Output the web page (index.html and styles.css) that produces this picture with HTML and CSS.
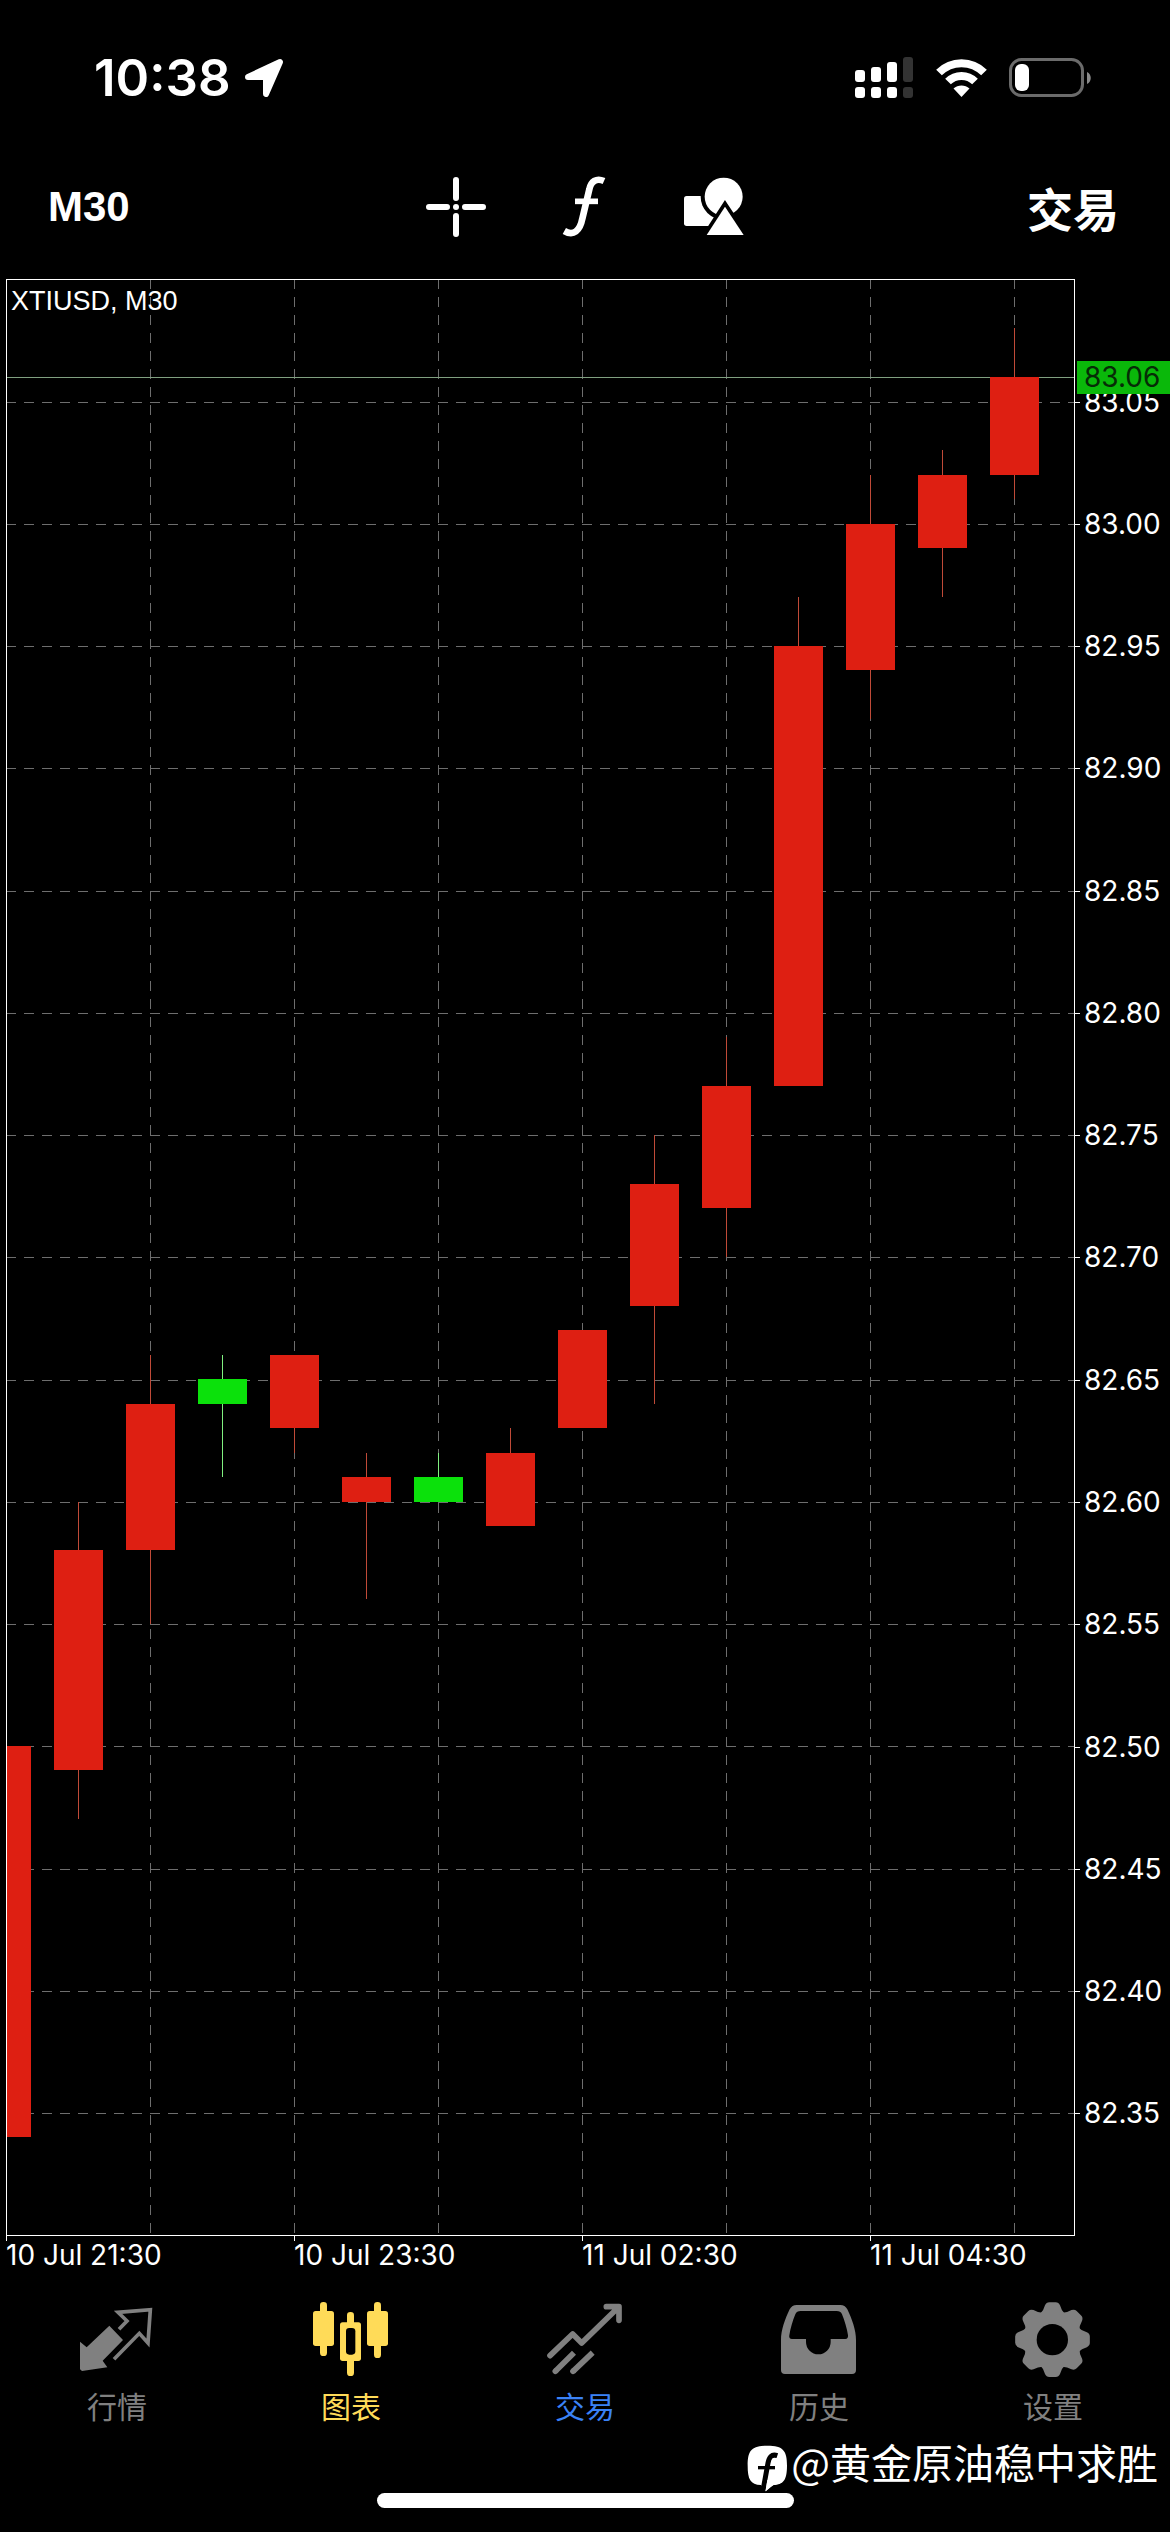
FILE: index.html
```html
<!DOCTYPE html>
<html lang="zh-CN">
<head>
<meta charset="utf-8">
<meta name="viewport" content="width=device-width, initial-scale=1">
<title>XTIUSD, M30</title>
<link rel="stylesheet" href="styles.css">
</head>
<body>
<div class="app">
  <header class="status">
    <div class="status-left">
      <span class="clock">10:38</span>
      <svg class="location" width="42" height="42" viewBox="0 0 42 42" aria-hidden="true">
        <path d="M5 20 37 5 23 37V20Z" fill="#fff" stroke="#fff" stroke-width="6" stroke-linejoin="round"/>
      </svg>
    </div>
    <div class="status-right">
      <svg width="59" height="42" viewBox="0 0 59 42" aria-hidden="true">
        <g fill="#fff">
          <rect x="0" y="13" width="10" height="12" rx="3"/><rect x="0" y="30" width="10" height="11" rx="3"/>
          <rect x="16" y="10" width="10" height="15" rx="3"/><rect x="16" y="30" width="10" height="11" rx="3"/>
          <rect x="32" y="5" width="10" height="20" rx="3"/><rect x="32" y="30" width="10" height="11" rx="3"/>
        </g>
        <g fill="#333">
          <rect x="48" y="0" width="10" height="25" rx="3"/><rect x="48" y="30" width="10" height="11" rx="3"/>
        </g>
      </svg>
      <svg width="51" height="38" viewBox="0 0 51 38" aria-hidden="true">
        <g fill="none" stroke="#fff" stroke-width="8">
          <path d="M3 13.500C15.500 1 35.500 1 48 13.500"/>
          <path d="M12 22.500C19.500 15 31.500 15 39 22.500"/>
        </g>
        <path d="M25.500 38 17.500 29.500C22 25.500 29 25.500 33.500 29.500Z" fill="#fff"/>
      </svg>
      <svg width="83" height="40" viewBox="0 0 83 40" aria-hidden="true">
        <rect x="1.500" y="1.500" width="72" height="36" rx="11" fill="none" stroke="#6b6b6b" stroke-width="3"/>
        <rect x="6" y="6" width="14" height="27" rx="6" fill="#fff"/>
        <path d="M78 14C83 16 83 24 78 26Z" fill="#8a8a8a"/>
      </svg>
    </div>
  </header>

  <div class="toolbar">
    <button class="timeframe" type="button">M30</button>
    <div class="tools">
      <button type="button" aria-label="十字线">
        <svg width="64" height="64" viewBox="0 0 64 64" aria-hidden="true">
          <path d="M5 32H23M41 32H59M32 5V23M32 41V59" stroke="#fff" stroke-width="6" stroke-linecap="round"/>
          <circle cx="32" cy="32" r="3" fill="#fff"/>
        </svg>
      </button>
      <button type="button" aria-label="指标">
        <svg width="64" height="64" viewBox="33 45 192 192" fill="none" stroke="#fff" aria-hidden="true">
          <path d="M189 63C166 53 150 64 145 88L124 176C117 212 98 229 70 213" stroke-width="20"/>
          <path d="M102 124H171" stroke-width="17"/>
        </svg>
      </button>
      <button type="button" aria-label="图形">
        <svg width="64" height="64" viewBox="417 45 192 192" aria-hidden="true">
          <rect x="429" y="108" width="90" height="90" rx="8" fill="#fff"/>
          <circle cx="548" cy="110" r="69" fill="#000"/>
          <circle cx="548" cy="110" r="57" fill="#fff"/>
          <path d="M552 140 608 225H497Z" fill="#fff" stroke="#000" stroke-width="22" paint-order="stroke"/>
        </svg>
      </button>
    </div>
    <button class="trade" type="button">交易</button>
  </div>

  <main class="chart">
    <div class="plot">
      <svg class="plot-area" viewBox="0 0 1069 1957" role="img" aria-label="XTIUSD M30">
        <g class="grid-lines">
          <path d="M0 123.500H1068M0 245.500H1068M0 367.500H1068M0 489.500H1068M0 612.500H1068M0 734.500H1068M0 856.500H1068M0 978.500H1068M0 1101.500H1068M0 1223.500H1068M0 1345.500H1068M0 1467.500H1068M0 1590.500H1068M0 1712.500H1068M0 1834.500H1068"/>
          <path d="M144.500 0V1956M288.500 0V1956M432.500 0V1956M576.500 0V1956M720.500 0V1956M864.500 0V1956M1008.500 0V1956"/>
        </g>
        <path class="bid-line" d="M0 98.500H1068"/>
        <g class="down">
          <path class="wick" d="M72.500 1223V1540M144.500 1076V1345M288.500 1149V1174M360.500 1174V1320M504.500 1149V1174M648.500 856V1125M720.500 758V978M792.500 318V367M864.500 196V440M936.500 171V318M1008.500 49V220"/>
          <rect x="1" y="1467" width="24" height="391"/>
          <rect x="48" y="1271" width="49" height="220"/>
          <rect x="120" y="1125" width="49" height="146"/>
          <rect x="264" y="1076" width="49" height="73"/>
          <rect x="336" y="1198" width="49" height="25"/>
          <rect x="480" y="1174" width="49" height="73"/>
          <rect x="552" y="1051" width="49" height="98"/>
          <rect x="624" y="905" width="49" height="122"/>
          <rect x="696" y="807" width="49" height="122"/>
          <rect x="768" y="367" width="49" height="440"/>
          <rect x="840" y="245" width="49" height="146"/>
          <rect x="912" y="196" width="49" height="73"/>
          <rect x="984" y="98" width="49" height="98"/>
        </g>
        <g class="up">
          <path class="wick" d="M216.500 1076V1198M432.500 1174V1198"/>
          <rect x="192" y="1100" width="49" height="25"/>
          <rect x="408" y="1198" width="49" height="25"/>
        </g>
        <rect class="frame" x="0.500" y="0.500" width="1068" height="1956"/>
      </svg>
      <h1 class="symbol">XTIUSD, M30</h1>
    </div>
    <div class="prices">
      <span>83.05</span><span>83.00</span><span>82.95</span><span>82.90</span><span>82.85</span>
      <span>82.80</span><span>82.75</span><span>82.70</span><span>82.65</span><span>82.60</span>
      <span>82.55</span><span>82.50</span><span>82.45</span><span>82.40</span><span>82.35</span>
      <strong class="bid" style="top: 5%">83.06</strong>
    </div>
    <div class="times">
      <span>10 Jul 21:30</span><span>10 Jul 23:30</span><span>11 Jul 02:30</span><span>11 Jul 04:30</span>
    </div>
  </main>

  <nav class="tabs">
    <a href="#quotes">
      <svg viewBox="51 24 240 240" aria-hidden="true">
        <path d="M60 155 80 172 148 107 189 150 128 212 142 232 66 243 60 238Z" fill="currentColor"/>
        <path d="M177 118 201 93 174 67 271 59 264 159 238 130 162 208" fill="none" stroke="currentColor" stroke-width="11"/>
      </svg>
      <span>行情</span>
    </a>
    <a class="active" href="#chart" aria-current="page">
      <svg viewBox="753 24 240 240" fill="currentColor" aria-hidden="true">
        <rect x="759" y="63" width="63" height="105" rx="8"/><rect x="780" y="36" width="21" height="162" rx="10"/>
        <rect x="921" y="63" width="63" height="105" rx="8"/><rect x="942" y="36" width="21" height="168" rx="10"/>
        <rect x="861" y="66" width="21" height="192" rx="10"/><rect x="840" y="97" width="63" height="116" rx="8"/>
        <rect x="858" y="114" width="28" height="80" rx="10" fill="#000"/>
      </svg>
      <span>图表</span>
    </a>
    <a class="alert" href="#trade">
      <svg viewBox="45 24 240 240" fill="none" stroke="currentColor" stroke-width="17" aria-hidden="true">
        <path d="M60 197 128 132 155 159 264 53M229 50H267V91" stroke-linecap="round" stroke-linejoin="round"/>
        <path d="M76 244 132 188M129 244 188 188"/>
        <path d="M76 244 77 243M129 244 130 243" stroke-linecap="round"/>
      </svg>
      <span>交易</span>
    </a>
    <a href="#history">
      <svg viewBox="147 24 240 240" fill="currentColor" aria-hidden="true">
        <path fill-rule="evenodd" d="M153 150C153 120 165 88 179 58Q186 45 200 45H331Q345 45 352 58C366 88 378 120 378 150V240Q378 252 366 252H165Q153 252 153 240ZM212 63H320Q332 63 336 73C344 93 351 115 354 136Q355 147 346 147H302V156A37 37 0 0 1 228 156V147H186Q176 147 178 136C181 115 188 93 196 73Q200 63 212 63Z"/>
      </svg>
      <span>历史</span>
    </a>
    <a href="#settings">
      <svg viewBox="849 24 240 240" fill="currentColor" aria-hidden="true">
        <defs>
          <path id="tooth" d="M930 72Q941 62 945 46Q949 37 958 37H977Q986 37 990 46Q994 62 1005 72V110H930Z"/>
        </defs>
        <circle cx="967" cy="149" r="67" fill="none" stroke="currentColor" stroke-width="40"/>
        <use href="#tooth"/>
        <use href="#tooth" transform="rotate(45 967.500 149)"/>
        <use href="#tooth" transform="rotate(90 967.500 149)"/>
        <use href="#tooth" transform="rotate(135 967.500 149)"/>
        <use href="#tooth" transform="rotate(180 967.500 149)"/>
        <use href="#tooth" transform="rotate(225 967.500 149)"/>
        <use href="#tooth" transform="rotate(270 967.500 149)"/>
        <use href="#tooth" transform="rotate(315 967.500 149)"/>
        <circle cx="967" cy="149" r="47" fill="#000"/>
      </svg>
      <span>设置</span>
    </a>
  </nav>

  <footer class="author">
    <svg width="40" height="47" viewBox="42 468 120 141" aria-hidden="true">
      <path d="M44 530C44 485 55 470 103 470S162 485 162 530S150 586 122 588Q110 592 98 607L84 588C52 587 44 570 44 530Z" fill="#fff"/>
      <path d="M133 500C115 494 108 505 105 522L90 604" fill="none" stroke="#000" stroke-width="15"/>
      <path d="M75 536H126" stroke="#000" stroke-width="10"/>
      <path d="M98 607 103 572 124 586Z" fill="#fff"/>
    </svg>
    <span>@黄金原油稳中求胜</span>
  </footer>
  <div class="home-bar"></div>
</div>
</body>
</html>
```
FILE: styles.css
```css
* {
  box-sizing: border-box;
}

body {
  margin: 0;
  background: #000;
  color: #fff;
  font-family: Inter, "Noto Sans CJK SC", sans-serif;
}

svg {
  display: block;
  flex: none;
}

button {
  padding: 0;
  border: 0;
  background: none;
  color: inherit;
  font: inherit;
}

.app {
  display: flex;
  flex-direction: column;
  padding-bottom: 20px;
}

/* status bar */
.status {
  display: flex;
  justify-content: space-between;
  align-items: center;
  height: 156px;
  padding: 0 78px 0 94px;
}

.status-left {
  display: flex;
  align-items: center;
  gap: 12px;
}

.clock {
  font-size: 51px;
  font-weight: 600;
  line-height: 60px;
}

.status-right {
  display: flex;
  align-items: center;
  gap: 22px;
}

/* toolbar */
.toolbar {
  display: grid;
  grid-template-columns: 1fr auto 1fr;
  align-items: center;
  height: 102px;
  margin-bottom: 21px;
  padding: 0 51px 0 48px;
}

.timeframe {
  justify-self: start;
  font-family: "Liberation Sans", sans-serif;
  font-size: 42px;
  font-weight: 700;
  line-height: 56px;
}

.tools {
  display: flex;
  gap: 64px;
}

.trade {
  justify-self: end;
  font-family: "Noto Sans CJK SC", sans-serif;
  font-size: 46px;
  font-weight: 700;
  line-height: 60px;
}

/* chart */
.chart {
  display: grid;
  grid-template-columns: 1fr 95px;
  margin-left: 6px;
}

.plot {
  position: relative;
}

.plot-area {
  width: 100%;
  height: auto;
}

.grid-lines {
  fill: none;
  stroke: #6e6e6e;
  stroke-dasharray: 10 8;
}

.bid-line {
  stroke: #80a080;
}

.frame {
  fill: none;
  stroke: #fff;
}

.down {
  fill: #de1f12;
}

.down .wick {
  stroke: #c04a38;
}

.up {
  fill: #0be10b;
}

.up .wick {
  stroke: #80f080;
}

.symbol {
  position: absolute;
  top: 6px;
  left: 5px;
  margin: 0;
  font-family: "Liberation Sans", sans-serif;
  font-size: 27px;
  font-weight: 400;
  line-height: 32px;
}

.prices {
  position: relative;
  display: grid;
  grid-template-rows: repeat(15, 2fr);
  padding: 62px 0 61px;
  font-size: 28px;
  line-height: 33px;
}

.prices span {
  display: flex;
  align-items: center;
  gap: 4px;
}

.prices span::before {
  content: "";
  width: 5px;
  height: 1px;
  background: #fff;
}

.bid {
  position: absolute;
  right: 0;
  left: 2px;
  height: 33px;
  margin-top: -16px;
  padding-left: 7px;
  background: #0ab80a;
  color: #062c06;
  font-weight: 400;
}

.times {
  display: grid;
  grid-template-columns: 288fr 288fr 288fr 205fr;
  font-size: 28px;
  line-height: 38px;
  white-space: nowrap;
}

.times span {
  background: linear-gradient(#fff, #fff) 0 0 / 1px 5px no-repeat;
}

/* tab bar */
.tabs {
  display: grid;
  grid-template-columns: repeat(5, 1fr);
  padding-top: 24px;
}

.tabs a {
  display: flex;
  flex-direction: column;
  align-items: center;
  gap: 12px;
  color: #808080;
  font-family: "Noto Sans CJK SC", sans-serif;
  font-size: 30px;
  line-height: 30px;
  text-decoration: none;
}

.tabs svg {
  width: 80px;
  height: 80px;
}

.tabs .active {
  color: #ffdb58;
}

.alert span {
  color: #3a82f7;
}

.author {
  display: flex;
  justify-content: flex-end;
  align-items: center;
  gap: 4px;
  height: 50px;
  margin-top: 16px;
  padding-right: 12px;
  font-family: "Noto Sans CJK SC", sans-serif;
  font-size: 41px;
  line-height: 50px;
}

.author svg {
  margin-top: 14px;
}

.home-bar {
  align-self: center;
  width: 417px;
  height: 15px;
  margin-top: 7px;
  border-radius: 8px;
  background: #fff;
}
```
